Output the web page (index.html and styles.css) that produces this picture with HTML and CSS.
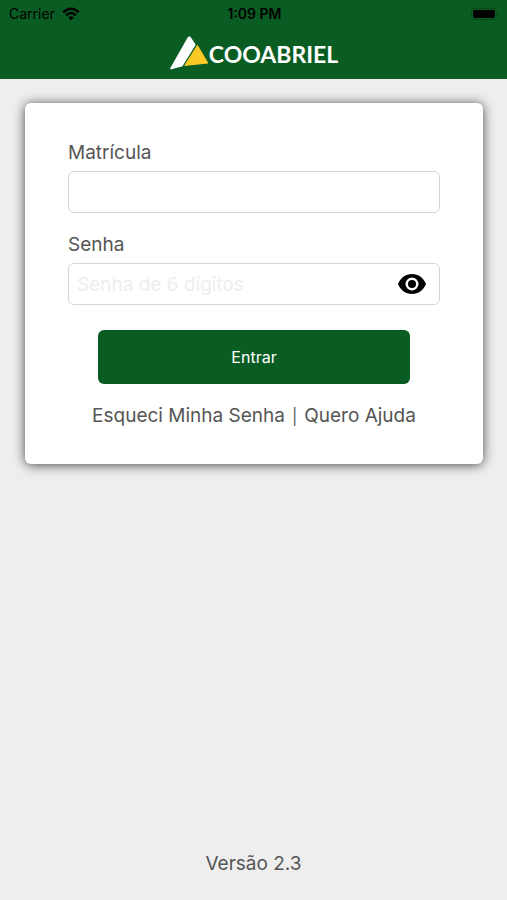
FILE: index.html
```html
<!DOCTYPE html>
<html lang="pt-BR">
<head>
<meta charset="utf-8">
<meta name="viewport" content="width=device-width, initial-scale=1">
<title>Cooabriel</title>
<link rel="stylesheet" href="styles.css">
</head>
<body>
<header class="header">
  <div class="status">
    <div class="carrier">
      <span>Carrier</span>
      <svg class="wifi" viewBox="0 0 18 14" aria-hidden="true">
        <path d="M1.2 5.2Q9 -1.8 16.8 5.2" />
        <path d="M4 8.2Q9 3.8 14 8.2" />
        <path class="wifi-dot" d="M6.2 10.4Q9 8 11.8 10.4L9 13.4Z" />
      </svg>
    </div>
    <span class="time">1:09 PM</span>
    <svg class="battery" viewBox="0 0 29 12" aria-hidden="true">
      <rect class="battery-case" x="0.5" y="0.5" width="25" height="11" rx="3" />
      <rect x="2" y="2" width="22" height="8" rx="2" />
      <path class="battery-tip" d="M27 4Q29 6 27 8Z" />
    </svg>
  </div>
  <div class="brand">
    <svg class="brand-mark" viewBox="0 0 40 36" aria-hidden="true">
      <path class="peak-white" d="M19.8 1.400L2.200 32.400L12.600 29.600L25.600 8.800L20.800 1.600Z" />
      <path class="peak-gold" d="M28.400 9.400L15.800 29.400L38.800 27Z" />
    </svg>
    <span class="brand-name">COOABRIEL</span>
  </div>
</header>
<main class="main">
  <form class="card">
    <label class="label" for="matricula">Matrícula</label>
    <div class="field">
      <input class="input" id="matricula" type="text">
    </div>
    <label class="label" for="senha">Senha</label>
    <div class="field">
      <input class="input" id="senha" type="password" placeholder="Senha de 6 dígitos">
      <button class="reveal" type="button" aria-label="Mostrar senha">
        <svg class="eye" viewBox="0 0 28 20" aria-hidden="true">
          <path fill-rule="evenodd" d="M14 0C7.600 0 2.200 4.100 0 10C2.200 15.900 7.600 20 14 20S25.800 15.900 28 10C25.800 4.100 20.400 0 14 0ZM14 3.500A6.500 6.500 0 1 1 14 16.500A6.500 6.500 0 1 1 14 3.500Z" />
          <circle cx="14" cy="10" r="4" />
        </svg>
      </button>
    </div>
    <button class="submit" type="submit">Entrar</button>
    <nav class="links">
      <a href="#senha">Esqueci Minha Senha</a>
      <span class="divider">|</span>
      <a href="#ajuda">Quero Ajuda</a>
    </nav>
  </form>
</main>
<footer class="footer">Versão 2.3</footer>
</body>
</html>
```
FILE: styles.css
```css
* {
  box-sizing: border-box;
}

body {
  margin: 0;
  min-height: 100vh;
  display: flex;
  flex-direction: column;
  background: #eee;
  color: #555;
  font-family: Inter, "Liberation Sans", sans-serif;
  font-size: 19px;
  line-height: 24px;
}

.header {
  background: #0a5d22;
}

.status {
  display: grid;
  grid-template-columns: 1fr auto 1fr;
  align-items: center;
  height: 28px;
  padding: 0 7px 0 9px;
  color: #000;
  font-size: 14px;
}

.carrier {
  display: flex;
  align-items: center;
  gap: 7px;
}

.wifi {
  width: 18px;
  height: 14px;
  fill: none;
  stroke: #000;
  stroke-width: 2.5;
}

.wifi-dot {
  fill: #000;
  stroke: none;
}

.time {
  font-weight: 600;
}

.battery {
  width: 29px;
  height: 12px;
  justify-self: end;
}

.battery-case {
  fill: none;
  stroke: #074819;
}

.battery-tip {
  fill: #074819;
}

.brand {
  display: flex;
  justify-content: center;
  align-items: center;
  height: 51px;
}

.brand-mark {
  width: 40px;
  height: 36px;
  flex: none;
}

.peak-white {
  fill: #fff;
  stroke: #fff;
  stroke-width: 2;
  stroke-linejoin: round;
}

.peak-gold {
  fill: #fbc926;
  stroke: #fbc926;
  stroke-linejoin: round;
}

.brand-name {
  color: #fff;
  font-family: Lato, "Liberation Sans", sans-serif;
  font-size: 23px;
  font-weight: 700;
}

.main {
  flex: 1;
  padding: 24px 24px 24px 25px;
}

.card {
  display: flex;
  flex-direction: column;
  padding: 38px 43px 36px;
  background: #fff;
  border-radius: 6px;
  box-shadow: 0 1px 12px rgba(0, 0, 0, 0.7);
}

.label {
  margin-bottom: 6px;
}

.field {
  display: flex;
  align-items: center;
  height: 42px;
  margin-bottom: 20px;
  border: 1px solid #d6d6d6;
  border-radius: 6px;
}

.input {
  flex: 1;
  min-width: 0;
  height: 100%;
  padding: 0 8px;
  border: 0;
  outline: 0;
  background: transparent;
  color: inherit;
  font: inherit;
}

.input::placeholder {
  color: #eee;
  opacity: 1;
}

.reveal {
  display: flex;
  padding: 0 13px 0 0;
  border: 0;
  background: none;
}

.eye {
  width: 28px;
  height: 20px;
}

.submit {
  width: 84%;
  height: 54px;
  margin: 5px auto 20px;
  border: 0;
  border-radius: 6px;
  background: #0a5d22;
  color: #fff;
  font: inherit;
  font-size: 16px;
}

.links {
  display: flex;
  justify-content: center;
  gap: 7px;
  white-space: nowrap;
}

.divider {
  font-size: 16px;
}

.links a {
  color: inherit;
  text-decoration: none;
}

.footer {
  padding-bottom: 24px;
  text-align: center;
}
```
